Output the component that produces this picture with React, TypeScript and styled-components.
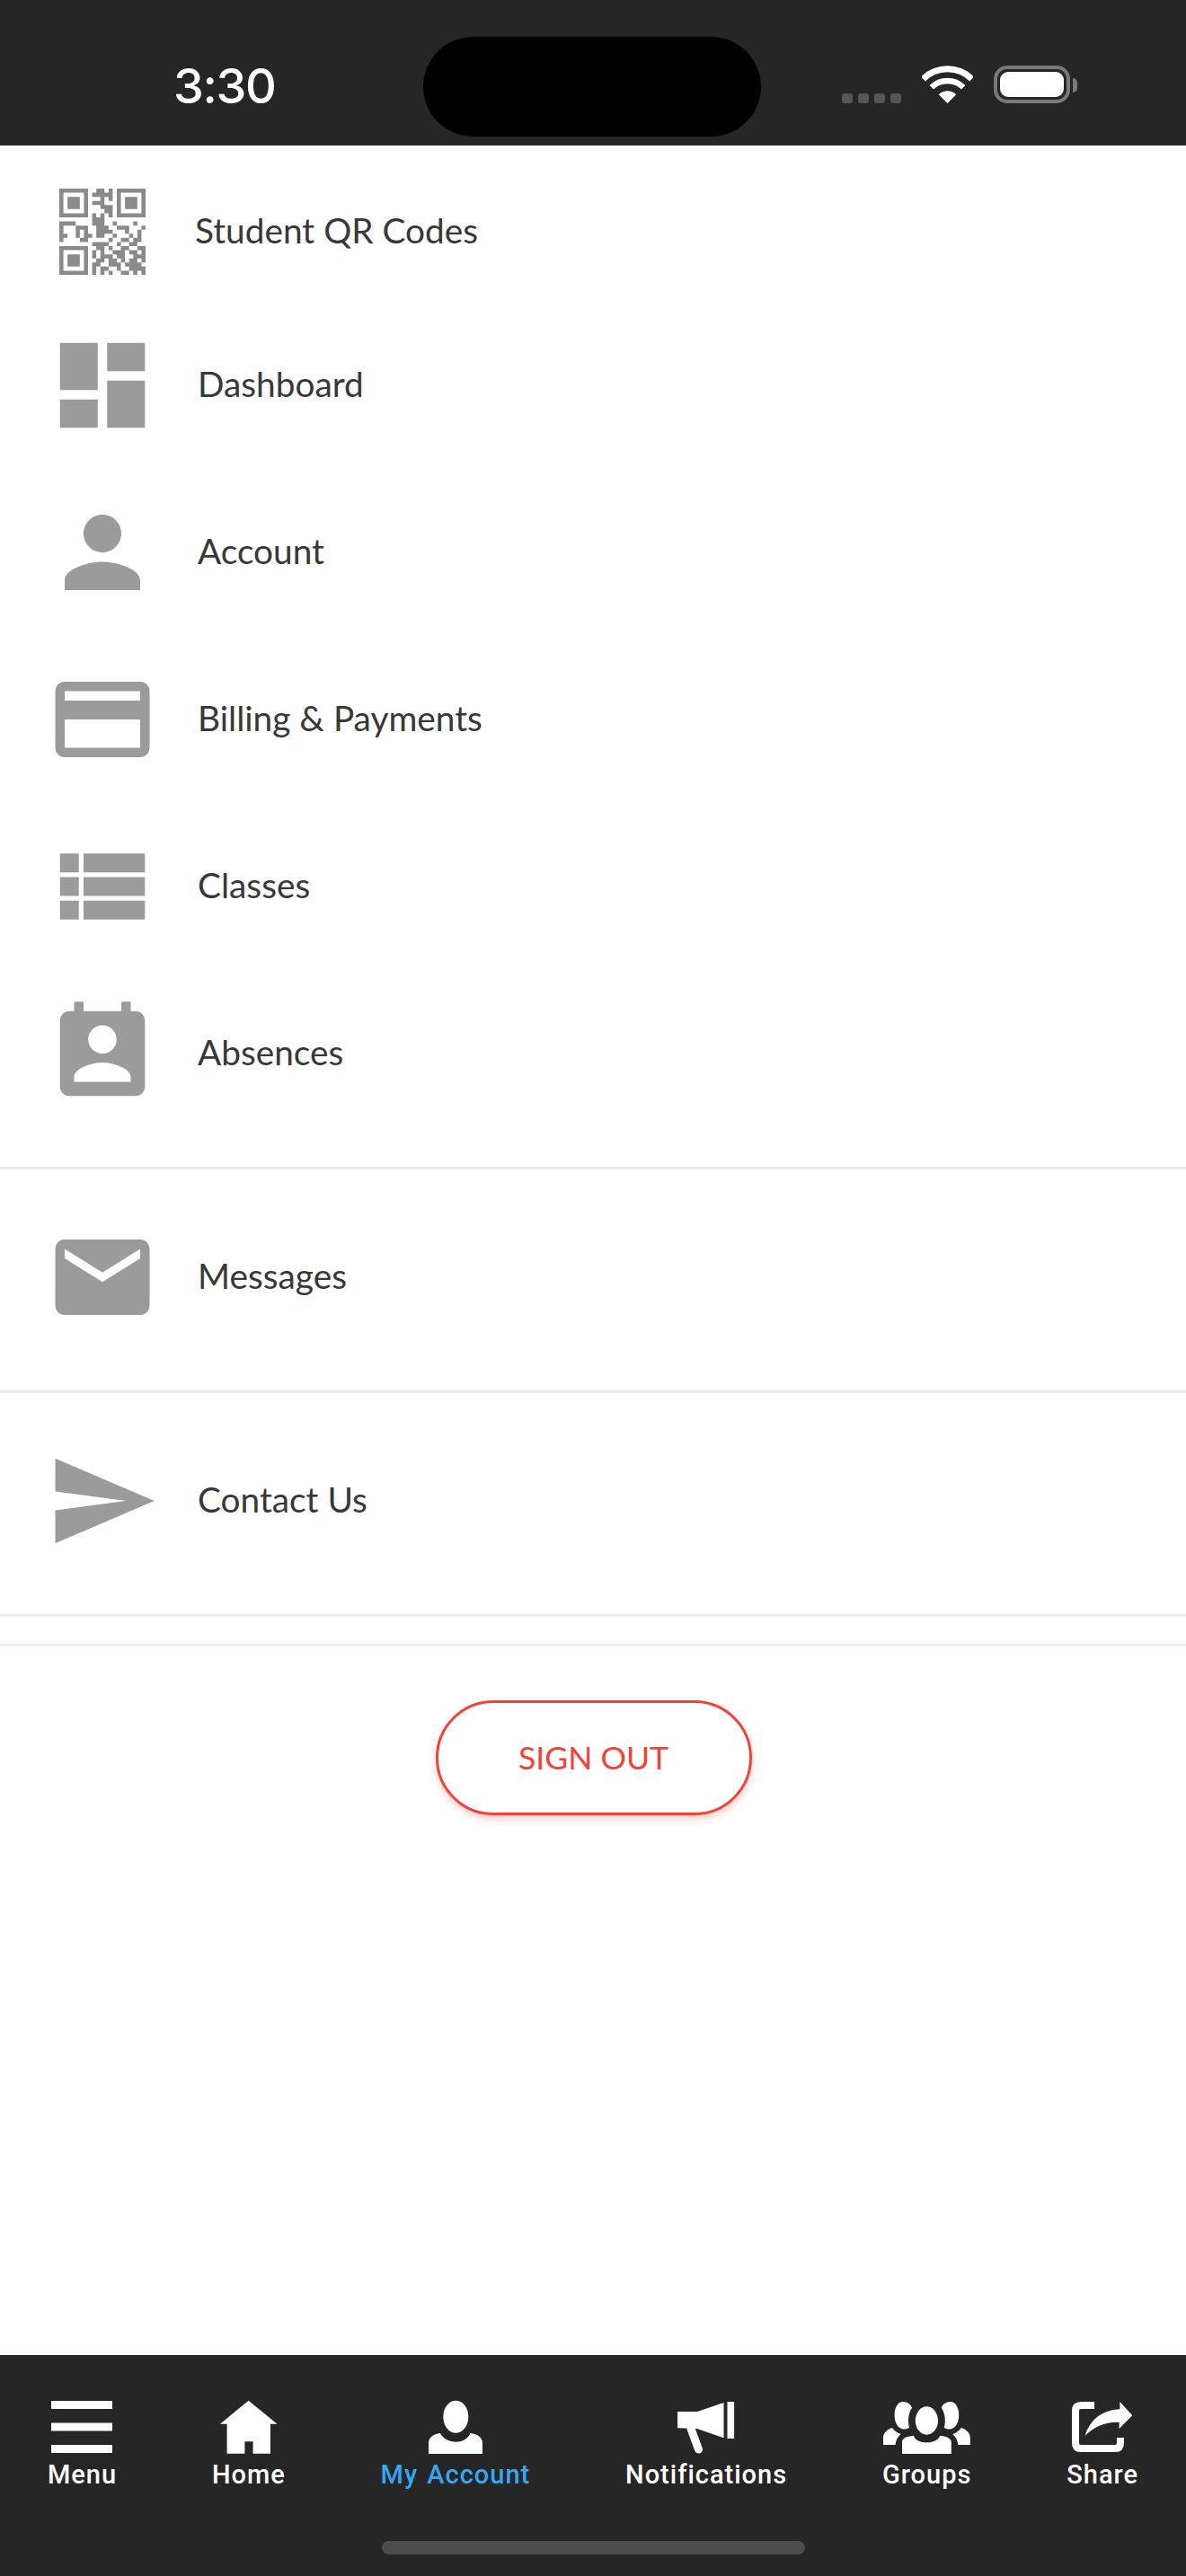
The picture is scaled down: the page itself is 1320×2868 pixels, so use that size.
import React from "react";
import styled, { createGlobalStyle } from "styled-components";

const Global = createGlobalStyle`
  html, body { margin: 0; padding: 0; background: #fff; }
  * { box-sizing: border-box; }
`;

const Page = styled.div`
  width: 1320px;
  height: 2868px;
  display: flex;
  flex-direction: column;
  background: #fff;
  font-family: Lato, "Liberation Sans", sans-serif;
  overflow: hidden;
`;

const StatusBar = styled.header`
  height: 162px;
  flex: none;
  background: #262626;
  display: flex;
  align-items: flex-start;
  padding-top: 41px;
`;
const Clock = styled.div`
  width: 278px;
  margin-left: 193px;
  height: 111px;
  display: flex;
  align-items: center;
  color: #fff;
  font: 500 54px/1 Inter, "Liberation Sans", sans-serif;
  letter-spacing: -1.4px;
  padding-bottom: 2px;
`;
const Island = styled.div`
  width: 376px;
  height: 111px;
  border-radius: 56px;
  background: #000;
  flex: none;
`;
const StatusIcons = styled.div`
  height: 111px;
  margin-left: 90px;
  padding-top: 32px;
  display: flex;
  align-items: flex-start;
`;
const Signal = styled.div`
  display: flex;
  gap: 6px;
  margin-top: 31px;
  margin-right: 23px;
`;
const SignalDot = styled.span`
  width: 12px;
  height: 11px;
  border-radius: 3px;
  background: #555;
`;
const Wifi = styled.svg`
  width: 57px;
  height: 42px;
  display: block;
  margin-right: 23px;
`;
const Battery = styled.div`
  width: 85px;
  height: 42px;
  border: 4px solid #7a7a7a;
  border-radius: 15px;
  padding: 3px;
`;
const BatteryFill = styled.div`
  width: 100%;
  height: 100%;
  background: #fff;
  border-radius: 9px;
`;
const BatteryNub = styled.div`
  width: 5px;
  height: 16px;
  margin: 14px 0 0 3px;
  background: #7a7a7a;
  border-radius: 0 8px 8px 0;
`;

const List = styled.main`
  flex: 1;
  padding-top: 18px;
  display: flex;
  flex-direction: column;
`;
const Row = styled.div<{ $sep?: boolean }>`
  display: flex;
  align-items: center;
  padding: ${(p) => (p.$sep ? "57px 0 63px 51px" : "30px 0 30px 51px")};
`;
const QrRow = styled(Row)`
  padding-left: 66px;
`;
const MenuIcon = styled.svg`
  width: 126px;
  height: 126px;
  flex: none;
  display: block;
  fill: #9b9b9b;
`;
const QrIcon = styled.svg`
  width: 96px;
  height: 96px;
  flex: none;
  display: block;
  fill: #8a8a8a;
`;
const RowLabel = styled.span<{ $qr?: boolean }>`
  margin-left: ${(p) => (p.$qr ? "55px" : "43px")};
  margin-top: ${(p) => (p.$qr ? "-4px" : "-4px")};
  font-size: 38.8px;
  line-height: 46px;
  color: #383838;
`;
const Divider = styled.hr<{ $top?: number }>`
  margin: ${(p) => p.$top ?? 0}px 0 0;
  height: 3px;
  border: 0;
  background: #e8ebef;
  flex: none;
`;
const SignOutWrap = styled.div`
  display: flex;
  justify-content: center;
  padding: 60px 0 0 1px;
`;
const SignOut = styled.button`
  width: 352px;
  height: 128px;
  border: 3px solid #f44336;
  border-radius: 64px;
  background: #fff;
  color: #f44336;
  font: 400 35.6px/1 Lato, "Liberation Sans", sans-serif;
  box-shadow: 0 4px 8px rgba(244, 67, 54, 0.28);
  padding: 0;
`;

const TabBar = styled.nav`
  height: 246px;
  flex: none;
  background: #262626;
  display: flex;
  flex-direction: column;
  align-items: stretch;
`;
const Tabs = styled.div`
  height: 207px;
  padding-top: 50px;
  display: flex;
  justify-content: space-around;
  align-items: flex-start;
`;
const Tab = styled.div<{ $active?: boolean }>`
  display: flex;
  flex-direction: column;
  align-items: center;
  color: ${(p) => (p.$active ? "#35a7f2" : "#fff")};
  font: 500 29px/34px Roboto, "Liberation Sans", sans-serif;
  letter-spacing: 1px;
  word-spacing: 2px;
  white-space: nowrap;
`;
const TabIcon = styled.svg`
  height: 60px;
  display: block;
  margin-bottom: 6px;
  fill: #fff;
`;
const HomeIndicator = styled.div`
  width: 471px;
  height: 15px;
  border-radius: 8px;
  background: #4d4d4d;
  margin: 0 auto;
`;

const QR = [
  "111111100110101111111",
  "100000101111101000001",
  "101110100010101011101",
  "101110101110001011101",
  "101110100011101011101",
  "100000100001101000001",
  "111111101010101111111",
  "000000001110000000000",
  "111100001110010000100",
  "100011100111001110001",
  "100010100111100010010",
  "110010110110010001010",
  "100001100000100110110",
  "000000001111001001100",
  "111111100110100110011",
  "100000101010011101101",
  "101110101011101100111",
  "101110100110110101101",
  "101110101100111011110",
  "100000101011001001111",
  "111111101010100110101",
];
const qrPath = QR.flatMap((line, y) =>
  line.split("").map((c, x) => (c === "1" ? `M${x} ${y}h1v1h-1z` : ""))
).join("");

const items = [
  { label: "Dashboard", d: "M3 13h8V3H3v10zm0 8h8v-6H3v6zm10 0h8V11h-8v10zm0-18v6h8V3h-8z" },
  { label: "Account", d: "M12 12c2.21 0 4-1.79 4-4s-1.79-4-4-4-4 1.79-4 4 1.79 4 4 4zm0 2c-2.67 0-8 1.34-8 4v2h16v-2c0-2.66-5.33-4-8-4z" },
  { label: "Billing & Payments", d: "M20 4H4c-1.11 0-1.99.89-1.99 2L2 18c0 1.11.89 2 2 2h16c1.11 0 2-.89 2-2V6c0-1.11-.89-2-2-2zm0 14H4v-6h16v6zm0-10H4V6h16v2z" },
  { label: "Classes", d: "M3 14h4v-4H3v4zm0 5h4v-4H3v4zM3 9h4V5H3v4zm5 5h13v-4H8v4zm0 5h13v-4H8v4zM8 5v4h13V5H8z" },
  { label: "Absences", d: "M19 3h-1V1h-2v2H8V1H6v2H5c-1.11 0-2 .9-2 2v14c0 1.1.89 2 2 2h14c1.1 0 2-.9 2-2V5c0-1.1-.9-2-2-2zm-7 3c1.66 0 3 1.34 3 3s-1.34 3-3 3-3-1.34-3-3 1.34-3 3-3zm6 12H6v-1c0-2 4-3.1 6-3.1s6 1.1 6 3.1v1z" },
];
const mail = "M20 4H4c-1.1 0-1.99.9-1.99 2L2 18c0 1.1.9 2 2 2h16c1.1 0 2-.9 2-2V6c0-1.1-.9-2-2-2zm0 4l-8 5-8-5V6l8 5 8-5v2z";
const send = "M2.01 21L23 12 2.01 3 2 10l15 2-15 2z";

const Glyph = ({ d }: { d: string }) => (
  <MenuIcon viewBox="0 0 24 24">
    <path d={d} />
  </MenuIcon>
);

const groupHead = "M22 2C27 2 31 5 32 9C28 14 27 24 29 31C27 32 25 32.5 23 32.5C17 32.5 12.6 26 12.6 17C12.6 8 16.5 2 22 2Z";
const groupShoulder = "M0 50V42C0 37 4 33 10 31C12 34 15 36.5 19.5 38C16 41 14 45 13.5 50Z";

export default function App() {
  return (
    <Page>
      <Global />
      <StatusBar>
        <Clock>3:30</Clock>
        <Island />
        <StatusIcons>
          <Signal>
            <SignalDot />
            <SignalDot />
            <SignalDot />
            <SignalDot />
          </Signal>
          <Wifi viewBox="0 0 57 42">
            <g fill="none" stroke="#fff">
              <path strokeWidth="7" d="M1.5 15A38.2 38.2 0 0 1 55.5 15" />
              <path strokeWidth="6.5" d="M10.8 24.3A25 25 0 0 1 46.2 24.3" />
            </g>
            <path fill="#fff" d="M28.5 42L18.8 32.3A13.7 13.7 0 0 1 38.2 32.3Z" />
          </Wifi>
          <Battery>
            <BatteryFill />
          </Battery>
          <BatteryNub />
        </StatusIcons>
      </StatusBar>

      <List>
        <QrRow>
          <QrIcon viewBox="0 0 21 21">
            <path d={qrPath} />
          </QrIcon>
          <RowLabel $qr>Student QR Codes</RowLabel>
        </QrRow>
        {items.map((it) => (
          <Row key={it.label}>
            <Glyph d={it.d} />
            <RowLabel>{it.label}</RowLabel>
          </Row>
        ))}
        <Divider $top={33} />
        <Row $sep>
          <Glyph d={mail} />
          <RowLabel>Messages</RowLabel>
        </Row>
        <Divider />
        <Row $sep>
          <Glyph d={send} />
          <RowLabel>Contact Us</RowLabel>
        </Row>
        <Divider />
        <Divider $top={30} />
        <SignOutWrap>
          <SignOut>SIGN OUT</SignOut>
        </SignOutWrap>
      </List>

      <TabBar>
        <Tabs>
          <Tab>
            <TabIcon viewBox="0 0 68 60" width="68">
              <path d="M0 1h68v9H0zM0 25.5h68v9H0zM0 50h68v9H0z" />
            </TabIcon>
            Menu
          </Tab>
          <Tab>
            <TabIcon viewBox="0 0 64 60" width="64">
              <path d="M31.6 .7L63.5 26.7H56V59.7H36.6V46.3H27.4V59.7H7.6V26.7H0Z" />
            </TabIcon>
            Home
          </Tab>
          <Tab $active>
            <TabIcon viewBox="0 0 60 60" width="60">
              <ellipse cx="30.3" cy="18.7" rx="14" ry="18" />
              <path d="M0 60V48C0 42 5 38 13 37C16 43 23 46.7 30.3 46.7C38 46.7 44 43 46.3 37C55 38 60 42 60 48V60Z" />
            </TabIcon>
            My Account
          </Tab>
          <Tab>
            <TabIcon viewBox="0 0 64 60" width="64">
              <path d="M0 13H22L51.5 3V42.3L22 32L0 31.3Z" />
              <path d="M55.5 2H63.1V43H55.5Z" />
              <path d="M15 32L23.5 55" stroke="#fff" strokeWidth="9" strokeLinecap="round" />
            </TabIcon>
            Notifications
          </Tab>
          <Tab>
            <TabIcon viewBox="0 0 96.8 60" width="96.8">
              <ellipse cx="48.4" cy="23" rx="12.6" ry="15.7" />
              <path d="M21 60V47C21 43 25 40.5 33.7 39.7C36 45 41 47.3 48.4 47.3C55 47.3 61 45 63.5 39.7C71 40.5 75.8 43 75.8 47V60Z" />
              <path d={groupHead} />
              <path d={groupShoulder} />
              <g transform="translate(96.8 0) scale(-1 1)">
                <path d={groupHead} />
                <path d={groupShoulder} />
              </g>
            </TabIcon>
            Groups
          </Tab>
          <Tab>
            <TabIcon viewBox="0 0 68 60" width="68">
              <path d="M25 6H10Q4 6 4 12V48Q4 54 10 54H48Q54 54 54 48V42" fill="none" stroke="#fff" strokeWidth="8" />
              <path d="M53.4 2L67.3 17.3L52.6 32V24.7C38 24 24 30 14.7 39.7C20 22 34 11 53.4 10.3Z" />
            </TabIcon>
            Share
          </Tab>
        </Tabs>
        <HomeIndicator />
      </TabBar>
    </Page>
  );
}
